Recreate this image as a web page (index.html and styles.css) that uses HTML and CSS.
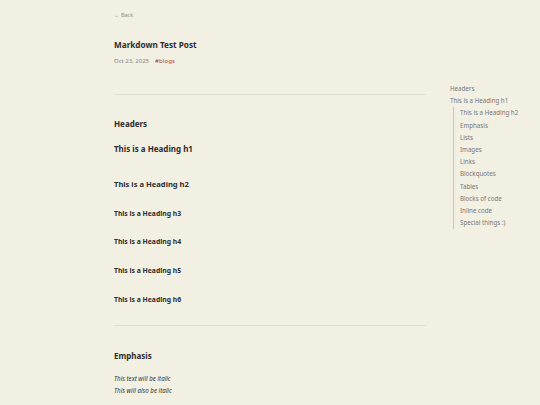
FILE: index.html
```html
<!DOCTYPE html>
<html>
<head>
<meta charset="utf-8">
<link rel="stylesheet" href="styles.css">
</head>
<body>
<div class="page">
  <main class="post">
    <a class="back" href="#">← Back</a>
    <h1 class="title">Markdown Test Post</h1>
    <div class="meta"><span class="date">Oct 23, 2025</span><span class="tag">#blogs</span></div>
    <hr class="rule first">
    <section class="content">
      <h2 class="sec top">Headers</h2>
      <div class="h h1">This is a Heading h1</div>
      <div class="h h2">This is a Heading h2</div>
      <div class="h h3">This is a Heading h3</div>
      <div class="h h4">This is a Heading h4</div>
      <div class="h h5">This is a Heading h5</div>
      <div class="h h6">This is a Heading h6</div>
      <hr class="rule">
      <h2 class="sec">Emphasis</h2>
      <p class="em"><em>This text will be italic</em><br><em>This will also be italic</em></p>
    </section>
  </main>
  <nav class="toc">
    <a class="toc-item">Headers</a>
    <a class="toc-item">This is a Heading h1</a>
    <div class="toc-sub">
      <a class="toc-item">This is a Heading h2</a>
      <a class="toc-item">Emphasis</a>
      <a class="toc-item">Lists</a>
      <a class="toc-item">Images</a>
      <a class="toc-item">Links</a>
      <a class="toc-item">Blockquotes</a>
      <a class="toc-item">Tables</a>
      <a class="toc-item">Blocks of code</a>
      <a class="toc-item">Inline code</a>
      <a class="toc-item">Special things :)</a>
    </div>
  </nav>
</div>
</body>
</html>
```
FILE: styles.css
```css
html, body { margin: 0; padding: 0; }
body {
  background: #f2efe3;
  font-family: "Noto Sans", sans-serif;
  color: #333;
  width: 540px;
  height: 405px;
  overflow: hidden;
}
.page {
  display: flex;
  padding-left: 114px;
}
.post {
  width: 312px;
  display: flex;
  flex-direction: column;
}
.back {
  margin-top: 11px;
  font-size: 5.5px;
  line-height: 8px;
  color: #8a8a8a;
  text-decoration: none;
}
.title {
  margin: 20px 0 0;
  font-size: 8.2px;
  line-height: 12px;
  font-weight: 700;
  color: #2e2e2e;
}
.meta {
  margin-top: 6px;
  font-size: 6px;
  line-height: 9px;
  display: flex;
  gap: 6px;
}
.date { color: #888; }
.tag { color: #a3433d; font-weight: 400; letter-spacing: 0.1px; }
.rule {
  border: 0;
  border-top: 1px solid #e0ddd0;
  margin: 28px 0 0;
  width: 312px;
}
.content { display: flex; flex-direction: column; }
.sec {
  margin: 24px 0 0;
  font-size: 8px;
  line-height: 11px;
  font-weight: 700;
  color: #2e2e2e;
}
.sec.top { margin-top: 23px; }
.h { font-weight: 700; color: #2e2e2e; }
.h1 { font-size: 8px; line-height: 11px; margin-top: 14px; }
.h2 { font-size: 7.6px; line-height: 11px; margin-top: 25px; }
.h3 { font-size: 6.8px; line-height: 10px; margin-top: 19px; }
.h4 { font-size: 6.8px; line-height: 10px; margin-top: 18px; }
.h5 { font-size: 6.8px; line-height: 10px; margin-top: 19px; }
.h6 { font-size: 6.8px; line-height: 10px; margin-top: 19px; }
.content .rule { margin-top: 20px; }
.em {
  margin: 12px 0 0;
  font-size: 6.2px;
  line-height: 12px;
  color: #333;
}
.toc {
  margin-left: 24px;
  margin-top: 83px;
  display: flex;
  flex-direction: column;
  font-size: 6.2px;
  line-height: 12.2px;
  color: #777;
}
.toc-item { display: block; color: #777; white-space: nowrap; }
.toc-sub {
  margin-left: 3px;
  padding-left: 6px;
  border-left: 1px solid #c9c6bb;
  display: flex;
  flex-direction: column;
}
```
